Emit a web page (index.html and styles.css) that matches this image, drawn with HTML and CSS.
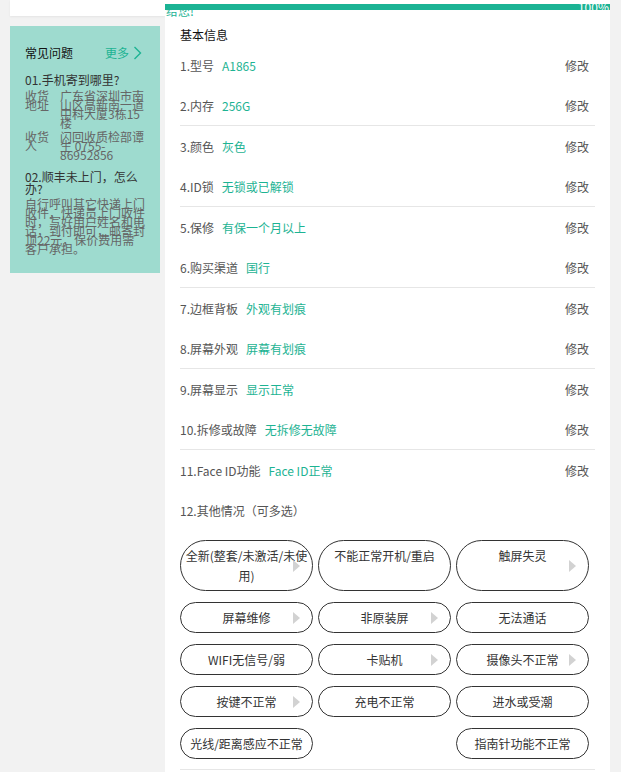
FILE: index.html
```html
<!DOCTYPE html>
<html>
<head>
<meta charset="UTF-8">
<title>估价 - 基本信息</title>
<link rel="stylesheet" href="styles.css">
</head>
<body>
<div class="page">
    <aside class="side">
        <div class="side-top"></div>

        <div class="faq">
            <div class="faq-head">
                <span class="faq-title">常见问题</span>
                <a class="faq-more">更多<svg width="9" height="14" viewBox="0 0 9 14"><polyline points="1.5,1 7.5,7 1.5,13" fill="none" stroke="#1db393" stroke-width="1.4"/></svg></a>
            </div>

            <p class="faq-q">01.手机寄到哪里?</p>
            <div class="faq-info">
                <span class="faq-label">收货地址</span>
                <span class="faq-value">广东省深圳市南山区高新南一道中科大厦3栋15<br>楼</span>
            </div>
            <div class="faq-info">
                <span class="faq-label">收货人</span>
                <span class="faq-value">闪回收质检部谭生 0755-<wbr>86952856</span>
            </div>

            <p class="faq-q faq-q-next">02.顺丰未上门，怎么办?</p>
            <p class="faq-a">自行呼叫其它快递上门收件，快递员上门收件时，写好用户姓名和电话，到付即可，邮寄封顶22元，保价费用需客户承担。</p>
        </div>
    </aside>

    <main class="panel">
        <div class="progress"><span class="progress-text">100%</span></div>
        <div class="notice">给您!</div>

        <h2 class="panel-title">基本信息</h2>

        <div class="group">
            <div class="row"><span class="row-label">1.型号</span><span class="row-value">A1865</span><a class="row-edit">修改</a></div>
            <div class="row"><span class="row-label">2.内存</span><span class="row-value">256G</span><a class="row-edit">修改</a></div>
        </div>
        <div class="group">
            <div class="row"><span class="row-label">3.颜色</span><span class="row-value">灰色</span><a class="row-edit">修改</a></div>
            <div class="row"><span class="row-label">4.ID锁</span><span class="row-value">无锁或已解锁</span><a class="row-edit">修改</a></div>
        </div>
        <div class="group">
            <div class="row"><span class="row-label">5.保修</span><span class="row-value">有保一个月以上</span><a class="row-edit">修改</a></div>
            <div class="row"><span class="row-label">6.购买渠道</span><span class="row-value">国行</span><a class="row-edit">修改</a></div>
        </div>
        <div class="group">
            <div class="row"><span class="row-label">7.边框背板</span><span class="row-value">外观有划痕</span><a class="row-edit">修改</a></div>
            <div class="row"><span class="row-label">8.屏幕外观</span><span class="row-value">屏幕有划痕</span><a class="row-edit">修改</a></div>
        </div>
        <div class="group">
            <div class="row"><span class="row-label">9.屏幕显示</span><span class="row-value">显示正常</span><a class="row-edit">修改</a></div>
            <div class="row"><span class="row-label">10.拆修或故障</span><span class="row-value">无拆修无故障</span><a class="row-edit">修改</a></div>
        </div>
        <div class="group group-last">
            <div class="row"><span class="row-label">11.Face ID功能</span><span class="row-value">Face ID正常</span><a class="row-edit">修改</a></div>
            <div class="row"><span class="row-label">12.其他情况（可多选）</span></div>

            <div class="options">
                <div class="option has-more">全新(整套/未激活/未使用)</div>
                <div class="option">不能正常开机/重启</div>
                <div class="option has-more">触屏失灵</div>

                <div class="option has-more">屏幕维修</div>
                <div class="option has-more">非原装屏</div>
                <div class="option">无法通话</div>

                <div class="option">WIFI无信号/弱</div>
                <div class="option has-more">卡贴机</div>
                <div class="option has-more">摄像头不正常</div>

                <div class="option has-more">按键不正常</div>
                <div class="option">充电不正常</div>
                <div class="option">进水或受潮</div>

                <div class="option">光线/距离感应不正常</div>
                <div class="option option-skip">指南针功能不正常</div>
            </div>
        </div>
    </main>
</div>
</body>
</html>
```

FILE: styles.css
```css
body {
    margin: 0;
    background-color: #f2f2f2;
    font-family: "Noto Sans CJK SC", "Noto Sans", sans-serif;
    font-size: 12px;
    color: #333333;
}

a {
    cursor: pointer;
}

.page {
    display: flex;
    align-items: flex-start;
    padding-left: 10px;
}

/* left column */

.side {
    width: 155px;
    flex-shrink: 0;
}

.side-top {
    height: 16px;
    background-color: #FFFFFF;
    box-shadow: 0 1px 2px rgba(0, 0, 0, 0.06);
}

.faq {
    width: 150px;
    box-sizing: border-box;
    margin-top: 10px;
    padding: 15px 15px 20px 15px;
    background-color: #9edbcf;
}

.faq-head {
    display: flex;
    justify-content: space-between;
    align-items: center;
    height: 24px;
    line-height: 24px;
}

.faq-title {
    color: #111111;
}

.faq-more {
    display: flex;
    align-items: center;
    gap: 4px;
    color: #1db393;
    margin-right: 3px;
}

.faq-q {
    margin: 9px 0 0 0;
    line-height: 12px;
    color: #333333;
}

.faq-q-next {
    margin-top: 12px;
}

.faq-info {
    display: flex;
    margin-top: 5px;
    line-height: 9px;
    color: #666666;
}

.faq-label {
    width: 24px;
    flex-shrink: 0;
    margin-right: 11px;
}

.faq-value {
    width: 85px;
}

.faq-a {
    margin: 4px 0 0 0;
    line-height: 9px;
    color: #666666;
}

/* main panel */

.panel {
    width: 445px;
    min-height: 800px;
    flex-shrink: 0;
    background-color: #FFFFFF;
    padding: 4px 15px 0 15px;
    box-sizing: border-box;
}

.progress {
    height: 6px;
    margin: 0 -15px;
    background-color: #1bb394;
    text-align: right;
    line-height: 6px;
}

.progress-text {
    color: #FFFFFF;
    font-size: 12px;
    margin-right: 1px;
}

.notice {
    margin: -3px 0 0 -14px;
    height: 8px;
    line-height: 8px;
    color: #1bb394;
}

.panel-title {
    margin: 10px 0 0 0;
    height: 20px;
    line-height: 20px;
    font-size: 12px;
    font-weight: normal;
    color: #111111;
}

.group {
    border-bottom: 1px solid #e6e6e6;
}

.row {
    display: flex;
    align-items: center;
    height: 40px;
    padding-right: 6px;
}

.row-label {
    color: #555555;
}

.row-value {
    margin-left: 8px;
    color: #1db393;
}

.row-edit {
    margin-left: auto;
    color: #555555;
}

.options {
    display: grid;
    grid-template-columns: repeat(3, 1fr);
    column-gap: 5px;
    row-gap: 11px;
    width: 409px;
    margin-top: 10px;
    padding-bottom: 10px;
}

.option {
    position: relative;
    border: 1px solid #333333;
    border-radius: 999px;
    padding: 5px 4px 4px 4px;
    line-height: 20px;
    text-align: center;
    color: #333333;
}

.option.has-more::after {
    content: "";
    position: absolute;
    right: 12px;
    top: 50%;
    margin-top: -6px;
    border-top: 6px solid transparent;
    border-bottom: 6px solid transparent;
    border-left: 7px solid #d2d2d2;
}

.option-skip {
    grid-column: 3;
}
```
